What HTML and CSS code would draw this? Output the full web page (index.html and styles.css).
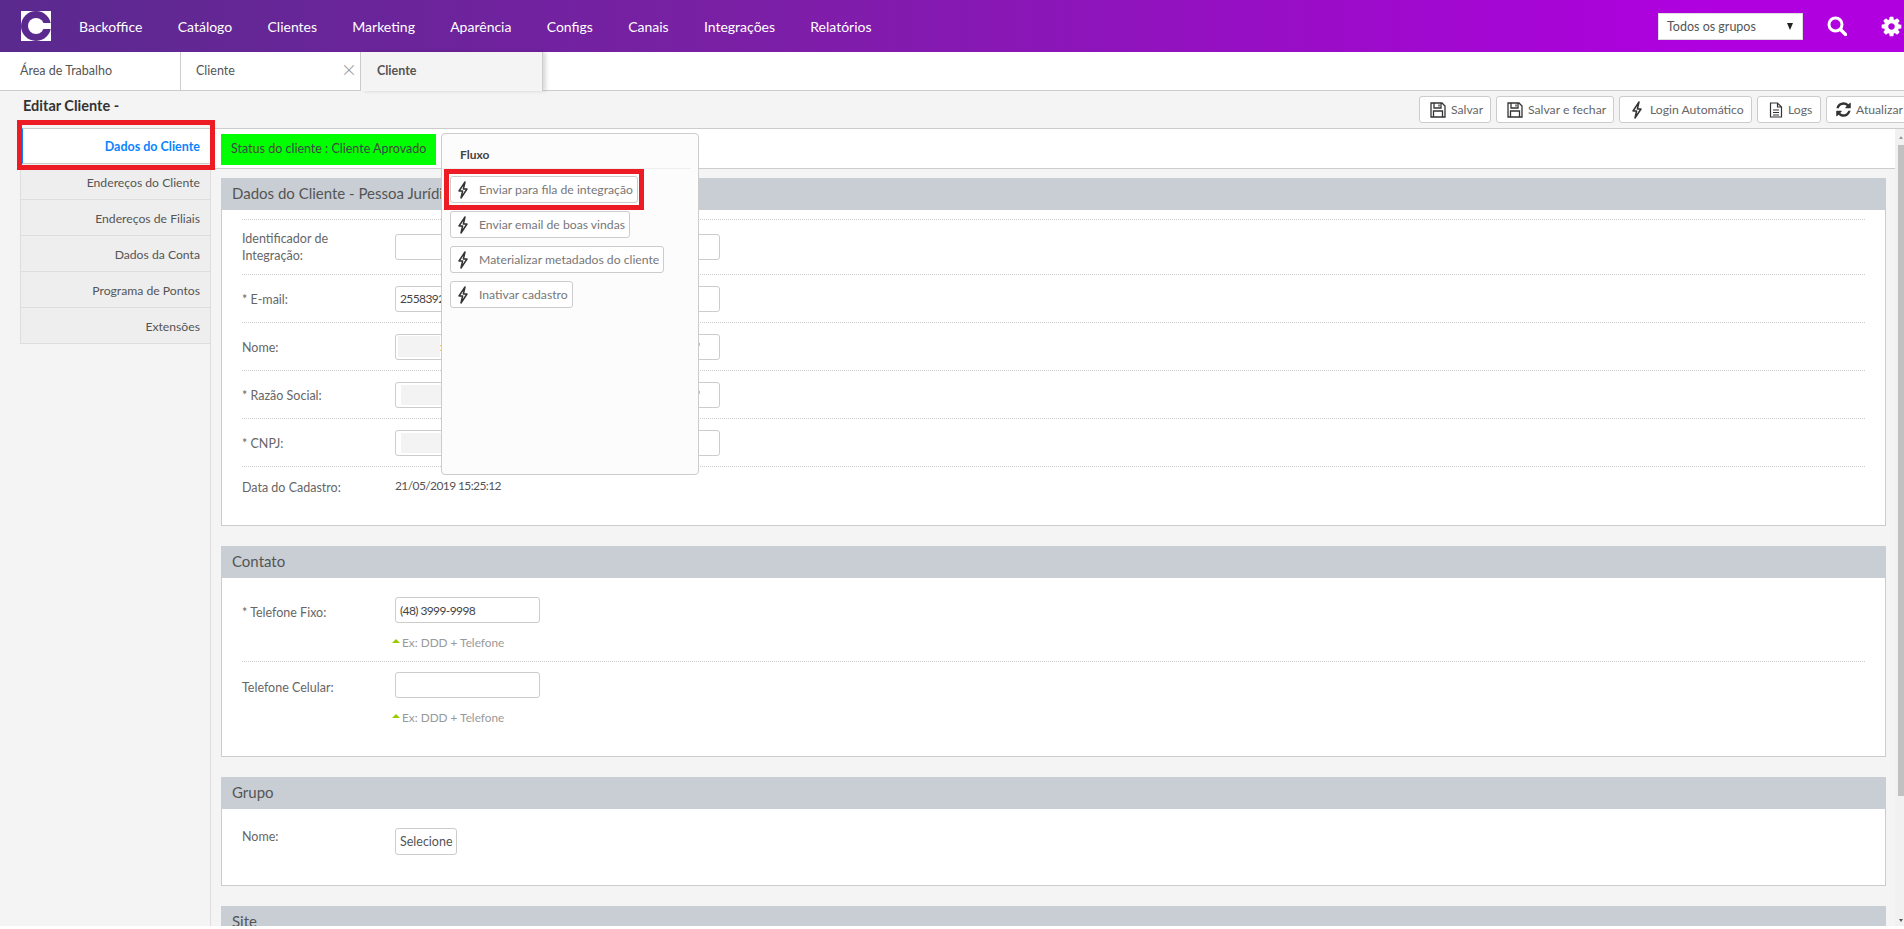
FILE: index.html
```html
<!DOCTYPE html>
<html lang="pt-BR">
<head>
    <meta charset="UTF-8">
    <title>Editar Cliente</title>
    <link rel="stylesheet" href="styles.css">
</head>
<body>
    <svg class="icon-defs" width="0" height="0">
        <symbol id="i-bolt" viewBox="0 0 12 18"><path d="M8 1 2 10h3.6L4 17l6-9H6.400L8 1z" fill="none" stroke="currentColor" stroke-width="1.500" stroke-linejoin="round"/></symbol>
        <symbol id="i-save" viewBox="0 0 16 16"><path d="M1 1h11l3 3v11H1zM4 1v5h7V1M9 2.500v2M3.500 15V9h9v6" fill="none" stroke="currentColor" stroke-width="1.300"/></symbol>
    </svg>

    <header class="topbar">
        <svg class="logo" viewBox="0 0 30 30" width="30" height="30">
            <rect width="30" height="30" fill="#fff"/>
            <circle cx="15" cy="15" r="15" fill="#5a2a8e"/>
            <circle cx="15" cy="15" r="8" fill="#fff"/>
            <rect x="15" y="12" width="15" height="6" fill="#fff"/>
        </svg>
        <nav class="main-nav">
            <a href="#">Backoffice</a>
            <a href="#">Catálogo</a>
            <a href="#">Clientes</a>
            <a href="#">Marketing</a>
            <a href="#">Aparência</a>
            <a href="#">Configs</a>
            <a href="#">Canais</a>
            <a href="#">Integrações</a>
            <a href="#">Relatórios</a>
        </nav>
        <div class="group-select">Todos os grupos<span class="caret"></span></div>
        <svg class="top-icon search-icon" viewBox="0 0 20 20" width="20" height="20">
            <circle cx="8.500" cy="8.500" r="6.500" fill="none" stroke="#fff" stroke-width="3"/>
            <path d="M13.500 13.500 18.500 18.500" stroke="#fff" stroke-width="3.400" stroke-linecap="round"/>
        </svg>
        <svg class="top-icon gear-icon" viewBox="0 0 1792 1792" width="23" height="23">
            <path fill="#fff" d="M1152 896q0-106-75-181t-181-75-181 75-75 181 75 181 181 75 181-75 75-181zm512-109v222q0 12-8 23t-20 13l-185 28q-19 54-39 91 35 50 107 138 10 12 10 25t-9 23q-27 37-99 108t-94 71q-12 0-26-9l-138-108q-44 23-91 38-16 136-29 186-7 28-36 28h-222q-14 0-24.500-8.500t-11.500-21.500l-28-184q-49-16-90-37l-141 107q-10 9-25 9-14 0-25-11-126-114-165-168-7-10-7-23 0-12 8-23 15-21 51-66.500t54-70.500q-27-50-41-99l-183-27q-13-2-21-12.500t-8-23.500v-222q0-12 8-23t19-13l186-28q14-46 39-92-40-57-107-138-10-12-10-24 0-10 9-23 26-36 98.500-107.500t94.500-71.500q13 0 26 10l138 107q44-23 91-38 16-136 29-186 7-28 36-28h222q14 0 24.500 8.500t11.500 21.500l28 184q49 16 90 37l142-107q9-9 24-9 13 0 25 10 129 119 165 170 7 8 7 22 0 12-8 23-15 21-51 66.500t-54 70.500q26 50 41 98l183 28q13 2 21 12.500t8 23.500z"/>
        </svg>
    </header>

    <div class="tabs">
        <div class="tab">Área de Trabalho</div>
        <div class="tab tab-closable">Cliente<span class="tab-close">&times;</span></div>
        <div class="tab tab-active">Cliente</div>
    </div>

    <div class="page-head">
        <h1>Editar Cliente -</h1>
        <div class="toolbar">
            <button class="btn btn-save"><svg width="16" height="16"><use href="#i-save"/></svg>Salvar</button>
            <button class="btn btn-savec"><svg width="16" height="16"><use href="#i-save"/></svg>Salvar e fechar</button>
            <button class="btn btn-login"><svg width="12" height="18"><use href="#i-bolt"/></svg>Login Automático</button>
            <button class="btn btn-logs">
                <svg viewBox="0 0 14 16" width="14" height="16"><path d="M1.500 1h7l4 4v10h-11zM8.500 1v4h4M4 8h6M4 10.500h6M4 13h6" fill="none" stroke="currentColor" stroke-width="1.200"/></svg>Logs
            </button>
            <button class="btn btn-refresh">
                <svg viewBox="0 0 1792 1792" width="17" height="17"><path fill="#333" d="M1639 1056q0 5-1 7-64 268-268 434.500t-478 166.500q-146 0-282.500-55t-243.500-157l-129 129q-19 19-45 19t-45-19-19-45v-448q0-26 19-45t45-19h448q26 0 45 19t19 45-19 45l-137 137q71 66 161 102t187 36q134 0 250-65t186-179q11-17 53-117 8-23 30-23h192q13 0 22.500 9.500t9.500 22.500zm25-800v448q0 26-19 45t-45 19h-448q-26 0-45-19t-19-45 19-45l138-138q-148-137-349-137-134 0-250 65t-186 179q-11 17-53 117-8 23-30 23h-199q-13 0-22.500-9.500t-9.500-22.500v-7q65-268 270-434.500t480-166.500q146 0 284 55.500t245 156.500l130-129q19-19 45-19t45 19 19 45z"/></svg>Atualizar
            </button>
        </div>
    </div>

    <div class="main">
        <ul class="side-menu">
            <li class="active">Dados do Cliente</li>
            <li>Endereços do Cliente</li>
            <li>Endereços de Filiais</li>
            <li>Dados da Conta</li>
            <li>Programa de Pontos</li>
            <li>Extensões</li>
        </ul>
        <div class="side-mark"></div>

        <div class="content">
            <div class="status-bar"><span class="status">Status do cliente : Cliente Aprovado</span></div>

            <div class="sections">
                <section class="panel">
                    <h2>Dados do Cliente - Pessoa Jurídica</h2>
                    <div class="panel-body">
                        <div class="row row-tall">
                            <label>Identificador de Integração:</label>
                            <input class="field" type="text">
                        </div>
                        <div class="row">
                            <label>* E-mail:</label>
                            <input class="field num" type="text" value="2558392">
                        </div>
                        <div class="row">
                            <label>Nome:</label>
                            <div class="field"><span class="mask mask-name"></span><span class="cut">:</span><span class="tick">'</span></div>
                        </div>
                        <div class="row">
                            <label>* Razão Social:</label>
                            <div class="field"><span class="mask"></span><span class="tick">'</span></div>
                        </div>
                        <div class="row">
                            <label>* CNPJ:</label>
                            <div class="field"><span class="mask"></span></div>
                        </div>
                        <div class="row row-last">
                            <label>Data do Cadastro:</label>
                            <span class="value num">21/05/2019 15:25:12</span>
                        </div>
                    </div>
                </section>

                <section class="panel">
                    <h2>Contato</h2>
                    <div class="panel-body panel-contact">
                        <div class="row row-hint">
                            <label>* Telefone Fixo:</label>
                            <div>
                                <input class="field field-short num" type="text" value="(48) 3999-9998">
                                <p class="hint">Ex: DDD + Telefone</p>
                            </div>
                        </div>
                        <div class="row row-hint">
                            <label>Telefone Celular:</label>
                            <div>
                                <input class="field field-short" type="text">
                                <p class="hint">Ex: DDD + Telefone</p>
                            </div>
                        </div>
                    </div>
                </section>

                <section class="panel">
                    <h2>Grupo</h2>
                    <div class="panel-body panel-group">
                        <div class="row row-top">
                            <label>Nome:</label>
                            <div class="field field-select">Selecione</div>
                        </div>
                    </div>
                </section>

                <section class="panel">
                    <h2>Site</h2>
                </section>
            </div>
        </div>

        <div class="scrollbar">
            <span class="arrow arrow-up"></span>
            <span class="thumb"></span>
            <span class="arrow arrow-down"></span>
        </div>

        <!-- Menu do fluxo, aberto sobre o formulario -->
        <div class="flow-menu">
            <h3>Fluxo</h3>
            <div class="flow-actions">
                <button class="btn flow-btn flow-marked"><svg width="12" height="18"><use href="#i-bolt"/></svg>Enviar para fila de integração</button>
                <button class="btn flow-btn"><svg width="12" height="18"><use href="#i-bolt"/></svg>Enviar email de boas vindas</button>
                <button class="btn flow-btn"><svg width="12" height="18"><use href="#i-bolt"/></svg>Materializar metadados do cliente</button>
                <button class="btn flow-btn"><svg width="12" height="18"><use href="#i-bolt"/></svg>Inativar cadastro</button>
            </div>
        </div>
    </div>
</body>
</html>
```

FILE: styles.css
```css
* {
    margin: 0;
    padding: 0;
    box-sizing: border-box;
    font-family: Lato, "Noto Sans", sans-serif;
}

html, body {
    height: 100%;
    overflow: hidden;
    background: #fff;
}

body {
    font-size: 12.5px;
    color: #555;
}

.icon-defs {
    position: absolute;
}

/* Top bar */
.topbar {
    height: 52px;
    display: flex;
    align-items: center;
    background: linear-gradient(90deg, #5a2a8e 0%, #7b1fa6 40%, #b000e0 90%);
    color: #fff;
}

.logo {
    margin-left: 21px;
    flex: none;
}

.main-nav {
    display: flex;
    margin-left: 28px;
    flex: 1;
}

.main-nav a {
    color: #fff;
    text-decoration: none;
    font-size: 14px;
    margin-right: 35.25px;
}

.group-select {
    width: 145px;
    height: 27px;
    background: #fff;
    border: 1px solid #ddd;
    color: #555;
    padding-left: 8px;
    display: flex;
    align-items: center;
    justify-content: space-between;
}

.caret {
    width: 0;
    height: 0;
    margin-right: 9px;
    border-left: 3.5px solid transparent;
    border-right: 3.5px solid transparent;
    border-top: 7px solid #222;
}

.top-icon {
    flex: none;
}

.search-icon {
    margin-left: 24px;
}

.gear-icon {
    margin-left: 33px;
    margin-right: 1px;
}

/* Tabs */
.tabs {
    height: 39px;
    display: flex;
    background: #fff;
    border-bottom: 1px solid #ccc;
}

.tab {
    width: 181px;
    padding: 11px 0 0 20px;
    border-right: 1px solid #ccc;
    position: relative;
}

.tab-closable {
    padding-left: 15px;
    width: 180px;
}

.tab-close {
    position: absolute;
    right: 4px;
    top: 5px;
    font-size: 24px;
    font-weight: 300;
    line-height: 24px;
    color: #999;
}

.tab-active {
    width: 182px;
    height: 39px;
    padding-left: 16px;
    font-weight: bold;
    background: #f4f4f4;
    box-shadow: 3px 0 4px rgba(0, 0, 0, 0.15);
}

/* Title and toolbar */
.page-head {
    height: 37px;
    display: flex;
    justify-content: space-between;
    background: #f4f4f4;
    overflow: hidden;
}

.page-head h1 {
    font-size: 14.5px;
    font-weight: bold;
    color: #333;
    margin: 6px 0 0 23px;
}

.toolbar {
    display: flex;
    gap: 5px;
    width: 485px;
    margin-top: 5px;
}

.btn {
    height: 27px;
    display: inline-flex;
    align-items: center;
    flex: none;
    gap: 5px;
    padding: 0 6px 0 10px;
    background: #fff;
    border: 1px solid #ccc;
    border-radius: 3px;
    color: #666;
    font-size: 12.2px;
    white-space: nowrap;
}

.btn svg {
    color: #333;
    flex: none;
}

.btn-save {
    width: 72px;
}

.btn-savec {
    width: 118px;
}

.btn-login {
    width: 133px;
    gap: 7px;
    padding-left: 11px;
}

.btn-logs {
    width: 64px;
    padding-left: 11px;
}

.btn-refresh {
    padding-left: 8px;
    gap: 4px;
}

/* Main area */
.main {
    position: relative;
    display: flex;
    height: 798px;
    background: #f4f4f4;
}

.side-menu {
    width: 191px;
    margin-left: 20px;
    flex: none;
    list-style: none;
    border-right: 1px solid #ddd;
}

.side-menu li {
    height: 36px;
    line-height: 37px;
    padding-right: 10px;
    text-align: right;
    font-size: 12.2px;
    background: #eee;
    border: 1px solid #ddd;
    border-top: 0;
    border-right: 0;
}

.side-menu li.active {
    margin-left: 2px;
    font-size: 12.5px;
    line-height: 35px;
    background: #fff;
    color: #0a84ff;
    font-weight: bold;
    border-top: 1px solid #ccc;
    border-bottom: 1px solid #ccc;
    border-left: 1px solid #0a84ff;
}

.side-mark {
    position: absolute;
    left: 17px;
    top: -8px;
    width: 198px;
    height: 50px;
    border: 5px solid #ed1c24;
}

.content {
    flex: 1;
    min-width: 0;
    overflow: hidden;
}

.status-bar {
    height: 41px;
    padding: 5px 0 0 10px;
    background: #fff;
    border-top: 1px solid #ccc;
    border-bottom: 1px solid #ccc;
}

.status {
    display: block;
    width: 215px;
    height: 31px;
    line-height: 30px;
    padding-left: 10px;
    background: #0f0;
    color: #444;
    white-space: nowrap;
}

.sections {
    padding: 9px 9px 0 10px;
}

.panel {
    margin-bottom: 20px;
}

.panel h2 {
    height: 32px;
    line-height: 31px;
    padding-left: 11px;
    background: #c8ced4;
    font-size: 15px;
    font-weight: normal;
    color: #555;
}

.panel-body {
    padding: 9px 20px 20px;
    background: #fff;
    border: 1px solid #ccc;
    border-top: 0;
    height: 316px;
}

.panel-contact {
    height: 179px;
    padding-top: 8px;
}

.panel-group {
    height: 77px;
    padding-top: 8px;
}

.row {
    display: flex;
    align-items: center;
    height: 48px;
    border-top: 1px dotted #ccc;
}

.row-tall {
    height: 55px;
}

.row-last {
    height: 40px;
}

.row-hint {
    align-items: flex-start;
    height: 75px;
    padding-top: 10px;
}

.row-hint:first-child {
    border-top: 0;
    padding-top: 11px;
}

.row-hint label {
    margin-top: 5px;
}

.row-top {
    align-items: flex-start;
    height: 40px;
    padding-top: 11px;
    border-top: 0;
}

.row label {
    width: 153px;
    flex: none;
    padding: 2px 30px 0 0;
    line-height: 17px;
    color: #666;
}

.row-tall label,
.row-top label {
    padding-top: 0;
}

.field {
    width: 325px;
    height: 26px;
    display: flex;
    align-items: center;
    padding: 0 4px;
    background: #fff;
    border: 1px solid #ccc;
    border-radius: 3px;
    color: #444;
    font-size: 12.5px;
    position: relative;
}

.field-short {
    width: 145px;
}

.field-select {
    width: 62px;
    height: 27px;
    color: #555;
}

/* Lato digits run wider than the original font */
.num {
    font-size: 12px;
    letter-spacing: -0.6px;
}

.mask {
    width: 42px;
    height: 20px;
    margin-left: 1px;
    background: #f3f3f3;
}

.mask-name {
    margin-left: -2px;
    height: 21px;
}

.cut {
    font-size: 11px;
    color: #222;
}

.tick {
    margin-left: auto;
    margin-right: 15px;
    font-size: 11px;
    color: #555;
}

.value {
    color: #555;
    margin-top: -2px;
}

.hint {
    margin-top: 11px;
    line-height: 17px;
    color: #999;
    font-size: 11.8px;
    padding-left: 7px;
    position: relative;
}

.hint::before {
    content: "";
    position: absolute;
    left: -3px;
    top: 5px;
    border-left: 4px solid transparent;
    border-right: 4px solid transparent;
    border-bottom: 4px solid #9c0;
}

/* Fake scrollbar column */
.scrollbar {
    width: 9px;
    flex: none;
    display: flex;
    flex-direction: column;
    align-items: flex-end;
    background: #f1f1f1;
    border-top: 1px solid #ccc;
}

.thumb {
    width: 6px;
    height: 651px;
    background: #c1c1c1;
}

.arrow {
    width: 0;
    height: 0;
    margin-right: 1px;
    border-left: 2.500px solid transparent;
    border-right: 2.500px solid transparent;
}

.arrow-up {
    margin-top: 7px;
    margin-bottom: 6px;
    border-bottom: 3px solid #999;
}

.arrow-down {
    margin-top: 123px;
    border-top: 3px solid #555;
}

/* Flow menu */
.flow-menu {
    position: absolute;
    left: 441px;
    top: 5px;
    width: 258px;
    height: 342px;
    background: #fcfcfc;
    border: 1px solid #ccc;
    border-radius: 4px;
}

.flow-menu h3 {
    margin: 0 7px 0 0;
    padding: 13px 0 0 18px;
    height: 35px;
    font-size: 12px;
    color: #444;
    border-bottom: 1px solid #eee;
}

.flow-actions {
    display: flex;
    flex-direction: column;
    align-items: flex-start;
    gap: 8px;
    padding: 7px 0 0 8px;
}

.flow-btn {
    gap: 10px;
    padding: 0 4px 0 6px;
    color: #777;
}

.flow-marked {
    position: relative;
}

.flow-marked::after {
    content: "";
    position: absolute;
    inset: -8px -7px;
    border: 5px solid #ed1c24;
}
```
